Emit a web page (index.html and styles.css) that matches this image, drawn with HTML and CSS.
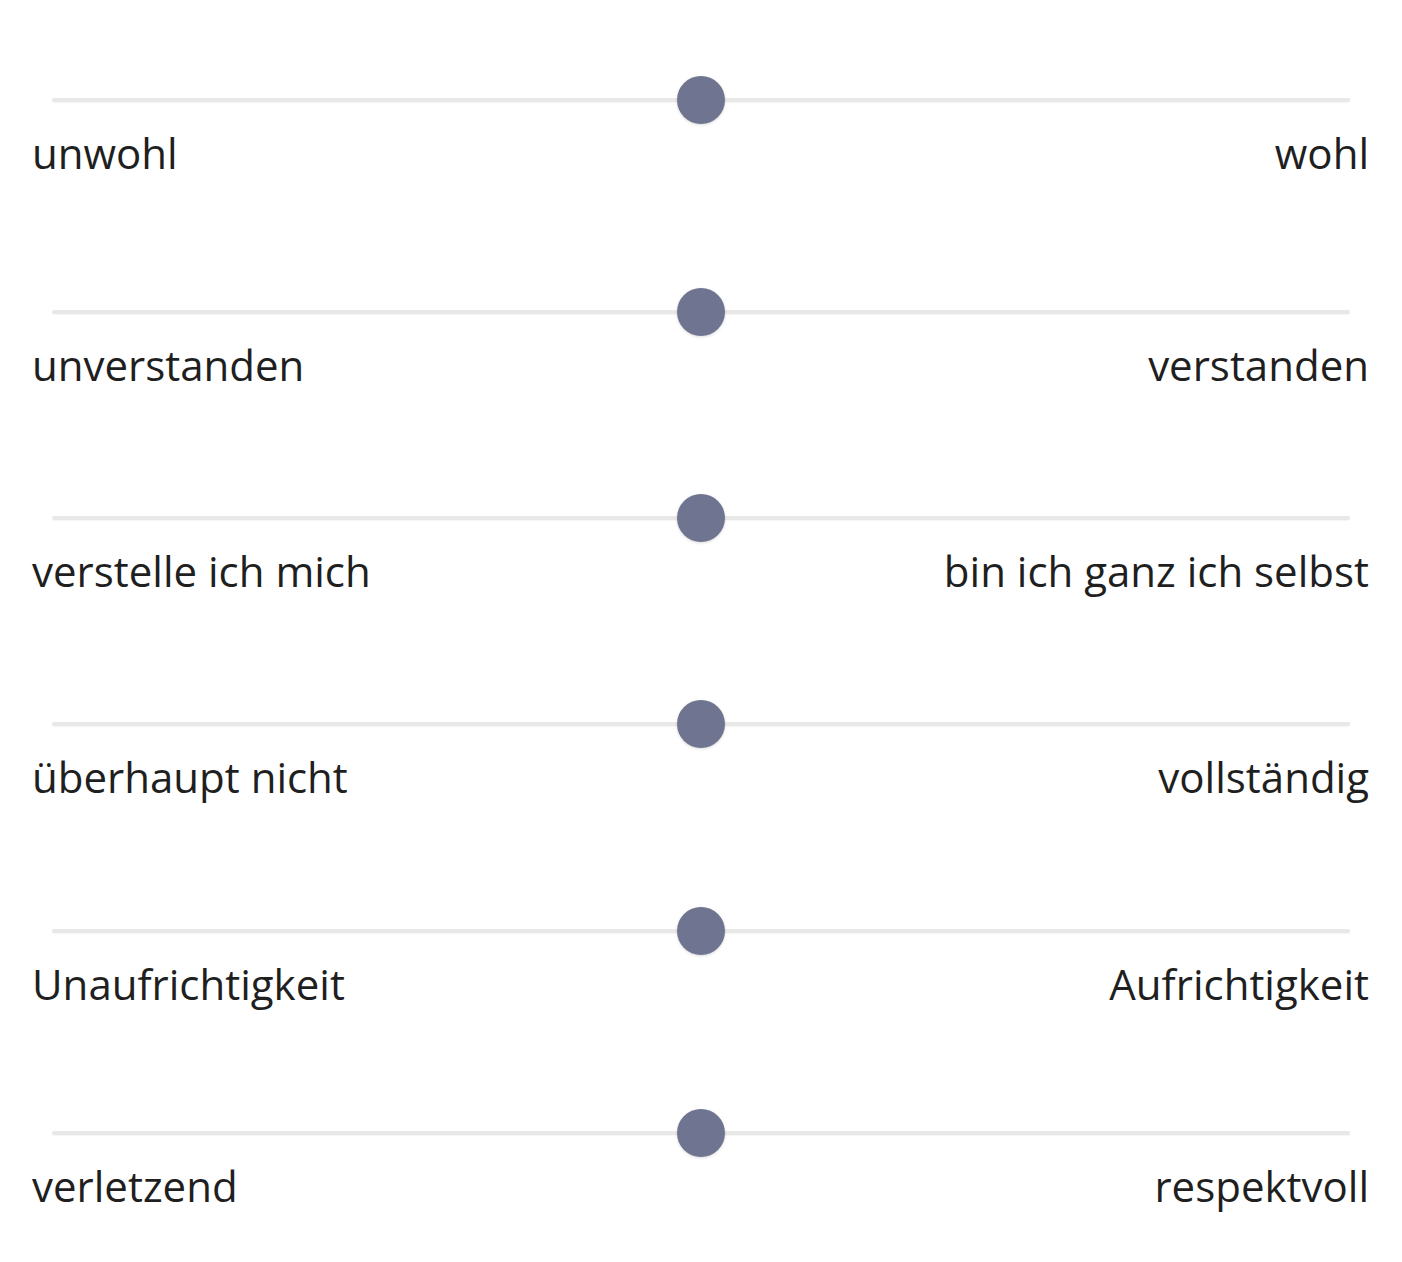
FILE: index.html
```html
<!DOCTYPE html>
<html lang="de">
<head>
    <meta charset="UTF-8">
    <title>Skalen</title>
    <link rel="stylesheet" href="styles.css">
</head>
<body>

<div class="scales">
    <div class="scale">
        <div class="slider"><div class="track"></div><div class="thumb"></div></div>
        <div class="labels"><span>unwohl</span><span>wohl</span></div>
    </div>
    <div class="scale">
        <div class="slider"><div class="track"></div><div class="thumb"></div></div>
        <div class="labels"><span>unverstanden</span><span>verstanden</span></div>
    </div>
    <div class="scale">
        <div class="slider"><div class="track"></div><div class="thumb"></div></div>
        <div class="labels"><span>verstelle ich mich</span><span>bin ich ganz ich selbst</span></div>
    </div>
    <div class="scale">
        <div class="slider"><div class="track"></div><div class="thumb"></div></div>
        <div class="labels"><span>überhaupt nicht</span><span>vollständig</span></div>
    </div>
    <div class="scale">
        <div class="slider"><div class="track"></div><div class="thumb"></div></div>
        <div class="labels"><span>Unaufrichtigkeit</span><span>Aufrichtigkeit</span></div>
    </div>
    <div class="scale">
        <div class="slider"><div class="track"></div><div class="thumb"></div></div>
        <div class="labels"><span>verletzend</span><span>respektvoll</span></div>
    </div>
</div>

</body>
</html>
```

FILE: styles.css
```css
body {
    font-family: "Open Sans", sans-serif;
    margin: 0;
    background-color: white;
    color: #1f1f1f;
}
.scales {
    padding: 76px 33px 0 32px;
}
.scale {
    height: 206px;
}
.scale:first-child {
    height: 212px;
}
.scale:nth-child(4) {
    height: 207px;
}
.scale:nth-child(5) {
    height: 202px;
}
.slider {
    position: relative;
    height: 48px;
    margin: 0 19px 0 20px;
}
.track {
    position: absolute;
    left: 0;
    right: 0;
    top: 22px;
    height: 4px;
    border-radius: 2px;
    background-color: #e8e8e8;
    box-shadow: 0 1px 1px rgba(0,0,0,0.04);
}
.thumb {
    position: absolute;
    left: 50%;
    top: 0;
    width: 48px;
    height: 48px;
    margin-left: -24px;
    border-radius: 50%;
    background-color: #6f7590;
    box-shadow: 0 1px 3px rgba(0,0,0,0.15);
}
.labels {
    display: flex;
    justify-content: space-between;
    font-size: 42px;
    line-height: 54px;
    margin-top: 2px;
}
```
